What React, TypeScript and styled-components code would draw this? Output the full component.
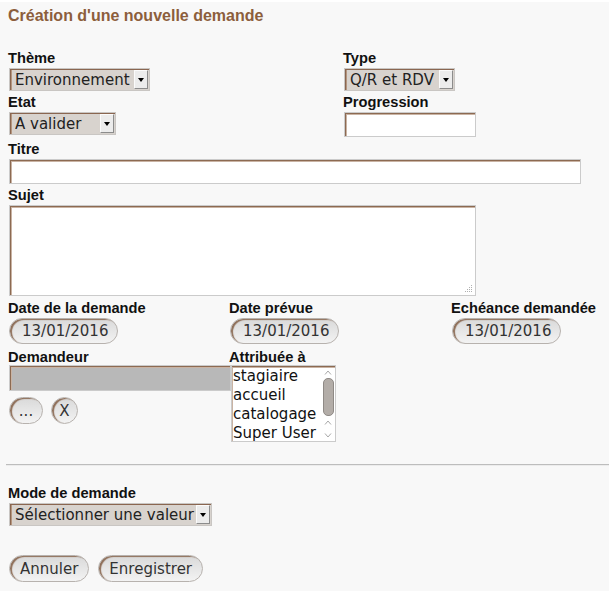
import styled, { createGlobalStyle } from 'styled-components'

const GlobalStyle = createGlobalStyle`
  html, body {
    margin: 0;
    background: #f8f8f8;
    overflow: hidden;
  }
  body {
    font-family: "Liberation Sans", Arial, sans-serif;
  }
`

const Page = styled.div`
  border-top: 2px solid #fff;
  padding: 5px 0 0 8px;
`

const Title = styled.h1`
  margin: 0;
  font-size: 16px;
  line-height: 18px;
  font-weight: bold;
  color: #8c5e3c;
`

const Columns = styled.div<{ $cols: string; $mt: number }>`
  display: grid;
  grid-template-columns: ${(p) => p.$cols};
  margin-top: ${(p) => p.$mt}px;
`

const Field = styled.div<{ $mt?: number }>`
  display: flex;
  flex-direction: column;
  align-items: flex-start;
  margin-top: ${(p) => p.$mt ?? 0}px;
`

const Label = styled.label<{ $tight?: boolean }>`
  display: block;
  font-size: 14.67px;
  line-height: 16px;
  font-weight: bold;
  color: #111;
  margin-bottom: ${(p) => (p.$tight ? 0 : 2)}px;
`

const controlFont = `
  font-family: "DejaVu Sans", Verdana, sans-serif;
  font-size: 15px;
  color: #222;
`

const SelectWrap = styled.div<{ $w: number }>`
  display: flex;
  align-items: center;
  width: ${(p) => p.$w}px;
  height: 23px;
  box-sizing: border-box;
  margin-left: 1px;
  border: 1px solid #c9c6c3;
  background: #d8d3ce;
  box-shadow: inset 1px 1px 0 #8a6650, inset 2px 0 0 #b4967f;
  padding-right: 1px;
`

const NativeSelect = styled.select`
  appearance: none;
  flex: 1;
  min-width: 0;
  height: 100%;
  border: 0;
  outline: none;
  background: transparent;
  padding: 0 0 0 5px;
  ${controlFont}
`

const Arrow = styled.span`
  display: flex;
  align-items: center;
  justify-content: center;
  width: 14px;
  height: 19px;
  box-sizing: border-box;
  background: #ececec;
  border: 1px solid;
  border-color: #fbfbfb #8c8c8c #8c8c8c #fbfbfb;
  &::after {
    content: '';
    border-left: 3px solid transparent;
    border-right: 3px solid transparent;
    border-top: 4px solid #000;
    margin-top: 1px;
  }
`

const TextInput = styled.input<{ $w: number; $h?: number; $gray?: boolean }>`
  width: ${(p) => p.$w}px;
  height: ${(p) => p.$h ?? 25}px;
  box-sizing: border-box;
  margin: 0 0 0 1px;
  border: 1px solid #cbcbcb;
  background: ${(p) => (p.$gray ? '#b8b8b8' : '#fff')};
  box-shadow: inset 1px 1px 0 #8c6a52, inset 2px 2px 0 #c9b3a3;
  padding: 0 4px;
  outline: none;
  ${controlFont}
`

const AreaWrap = styled.div`
  position: relative;
  margin-left: 1px;
`

const TextArea = styled.textarea`
  display: block;
  width: 467px;
  height: 91px;
  box-sizing: border-box;
  margin: 0;
  border: 1px solid #cbcbcb;
  background: #fff;
  box-shadow: inset 1px 1px 0 #8c6a52, inset 2px 2px 0 #c9b3a3;
  resize: none;
  outline: none;
  ${controlFont}
`

const Grip = styled.svg`
  position: absolute;
  right: 3px;
  bottom: 3px;
`

const pillLook = `
  box-sizing: border-box;
  border: 1px solid #b7b2ae;
  background: linear-gradient(#d9d9d9, #f3f3f3);
  box-shadow: inset 2px 1px 1px #8e6e58;
  outline: none;
  ${controlFont}
  color: #333;
`

const DateInput = styled.input`
  width: 109px;
  height: 26px;
  margin: 0 0 0 1px;
  border-radius: 13px;
  padding: 0 0 0 12px;
  ${pillLook}
`

const PillButton = styled.button<{ $w?: number }>`
  height: 27px;
  ${(p) => (p.$w ? `width: ${p.$w}px; padding: 0;` : 'padding: 0 10px;')}
  border-radius: 14px;
  margin: 0;
  ${pillLook}
`

const ButtonRow = styled.div<{ $gap: number; $mt: number }>`
  display: flex;
  gap: ${(p) => p.$gap}px;
  margin-top: ${(p) => p.$mt}px;
  margin-left: 1px;
`

const ListBox = styled.div`
  display: flex;
  width: 105px;
  height: 77px;
  box-sizing: border-box;
  margin-left: 2px;
  border: 1px solid #cbcbcb;
  background: #fff;
  box-shadow: inset 0 1px 0 #8c6a52, inset 1px 2px 0 #c9b3a3;
`

const ListItems = styled.ul`
  flex: 1;
  margin: 0;
  padding: 1px 0 0 1px;
  list-style: none;
  overflow: hidden;
  white-space: nowrap;
  line-height: 19px;
  ${controlFont}
  color: #111;
`

const Scroll = styled.div`
  width: 14px;
  display: flex;
  flex-direction: column;
  align-items: center;
  padding-top: 4px;
`

const Thumb = styled.div`
  width: 11px;
  height: 38px;
  margin: 3px 0 4px;
  box-sizing: border-box;
  border: 1px solid #8f8a86;
  border-radius: 5px;
  background: #b3ada8;
`

const Rule = styled.hr`
  margin: 22px 0 19px -2px;
  height: 0;
  border: 0;
  border-top: 1px solid #bdbdbd;
  border-bottom: 1px solid #ececec;
`

const Chevron = ({ up, mt = 0 }: { up?: boolean; mt?: number }) => (
  <svg width="8" height="5" viewBox="0 0 8 5" style={{ marginTop: mt }}>
    <path
      d={up ? 'M1 4.5 L4 1 L7 4.5' : 'M1 0.5 L4 4 L7 0.5'}
      fill="none"
      stroke="#a8a8a8"
      strokeWidth="1"
    />
  </svg>
)

const Select = ({ w, value, options }: { w: number; value: string; options: string[] }) => (
  <SelectWrap $w={w}>
    <NativeSelect defaultValue={value}>
      {options.map((o) => (
        <option key={o}>{o}</option>
      ))}
    </NativeSelect>
    <Arrow />
  </SelectWrap>
)

const users = ['stagiaire', 'accueil', 'catalogage', 'Super User']

const App = () => {
  return (
    <Page>
      <GlobalStyle />
      <Title>Création d'une nouvelle demande</Title>

      <Columns $cols="335px auto" $mt={25}>
        <div>
          <Field>
            <Label>Thème</Label>
            <Select w={141} value="Environnement" options={['Environnement', 'Culture', 'Social']} />
          </Field>
          <Field $mt={3}>
            <Label>Etat</Label>
            <Select w={107} value="A valider" options={['A valider', 'En cours', 'Terminée']} />
          </Field>
        </div>
        <div>
          <Field>
            <Label>Type</Label>
            <Select w={111} value="Q/R et RDV" options={['Q/R et RDV', 'Q/R', 'RDV']} />
          </Field>
          <Field $mt={3}>
            <Label>Progression</Label>
            <TextInput $w={132} />
          </Field>
        </div>
      </Columns>

      <Field $mt={4}>
        <Label>Titre</Label>
        <TextInput $w={572} />
      </Field>

      <Field $mt={3}>
        <Label>Sujet</Label>
        <AreaWrap>
          <TextArea />
          <Grip width="10" height="10" viewBox="0 0 10 10">
            {[
              [8, 0], [6, 2], [8, 2], [4, 4], [6, 4], [8, 4], [2, 6], [4, 6], [6, 6], [8, 6],
            ].map(([x, y]) => (
              <rect key={`${x}-${y}`} x={x} y={y + 2} width="1" height="1" fill="#b0b0b0" />
            ))}
          </Grip>
        </AreaWrap>
      </Field>

      <Columns $cols="221px 222px auto" $mt={4}>
        <Field>
          <Label>Date de la demande</Label>
          <DateInput defaultValue="13/01/2016" />
        </Field>
        <Field>
          <Label>Date prévue</Label>
          <DateInput defaultValue="13/01/2016" />
        </Field>
        <Field>
          <Label>Echéance demandée</Label>
          <DateInput defaultValue="13/01/2016" />
        </Field>
      </Columns>

      <Columns $cols="221px 222px" $mt={5}>
        <Field>
          <Label $tight>Demandeur</Label>
          <TextInput $w={222} $h={26} $gray readOnly />
          <ButtonRow $gap={8} $mt={6}>
            <PillButton $w={34}>...</PillButton>
            <PillButton $w={27}>X</PillButton>
          </ButtonRow>
        </Field>
        <Field>
          <Label $tight>Attribuée à</Label>
          <ListBox>
            <ListItems>
              {users.map((u) => (
                <li key={u}>{u}</li>
              ))}
            </ListItems>
            <Scroll>
              <Chevron up />
              <Thumb />
              <Chevron up />
              <Chevron mt={8} />
            </Scroll>
          </ListBox>
        </Field>
      </Columns>

      <Rule />

      <Field>
        <Label>Mode de demande</Label>
        <Select w={203} value="Sélectionner une valeur" options={['Sélectionner une valeur', 'Courriel', 'Téléphone']} />
      </Field>

      <ButtonRow $gap={9} $mt={29}>
        <PillButton>Annuler</PillButton>
        <PillButton>Enregistrer</PillButton>
      </ButtonRow>
    </Page>
  )
}

export default App
